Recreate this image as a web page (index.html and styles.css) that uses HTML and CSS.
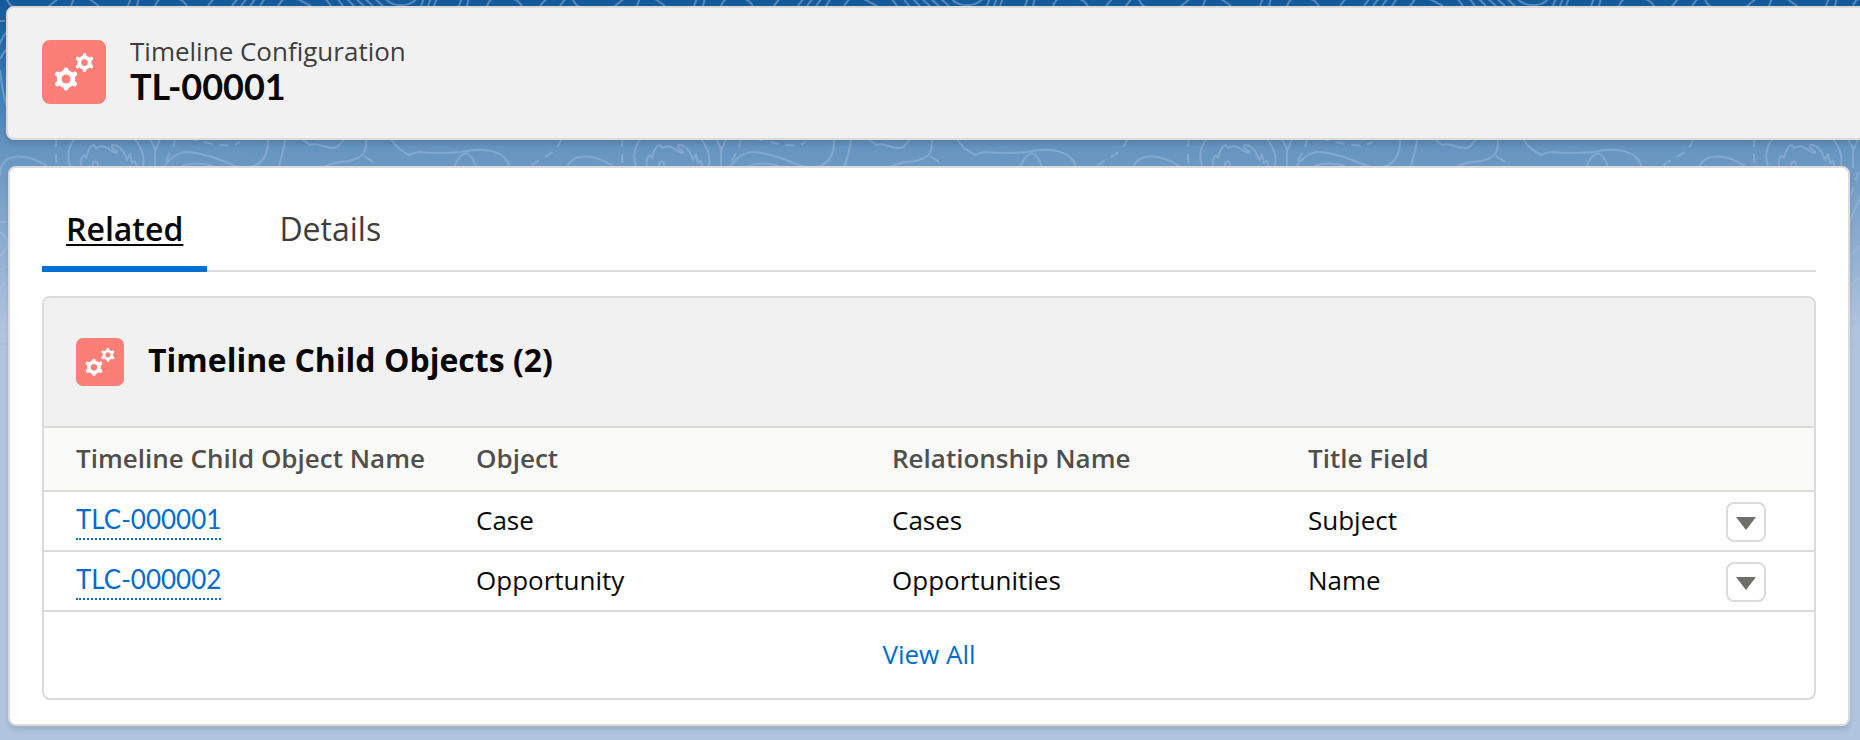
FILE: index.html
```
<!DOCTYPE html>
<html lang="en">
<head>
<meta charset="utf-8">
<meta name="viewport" content="width=device-width, initial-scale=1">
<title>TL-00001 | Timeline Configuration</title>
<link rel="stylesheet" href="styles.css">
</head>
<body>
<svg class="backdrop" aria-hidden="true">
  <defs>
    <pattern id="contours" width="566" height="380" patternUnits="userSpaceOnUse">
      <g class="contour">
        <path d="M6 -4C9 12 25 12 48 7L60 -3M71 6L74 -2M88 -2L99 6M128 6L131 -2M137 6L139 -2M155 6C157 1 159 -1 162 -3M174 -3C183 0 185 3 187 6M208 6L214 -2M232 6L238 -2M241 6L247 -2M250 6L256 -2M260 6L265 -2M278 6L284 -2M294 -3L311 6M325 -2L331 6M337 -2L343 6M346 -2L354 6M355 -2L364 6M364 -2L373 6M374 -2L383 6M384 -3C392 8 410 8 418 -3M421 6L424 -2M428 6L431 -2M434 6L437 -2M459 6L462 -2M467 6L469 -2M487 6C489 1 491 -1 494 -3M510 -2C518 0 520 3 522 6M540 6L547 -2M560 6L566 -2"/>
        <path d="M0 21H5M8 30C-2 42 -2 50 -3 58M0 59C4 52 6 49 12 46M0 70C2 90 4 100 9 112M0 175C1 150 28 154 47 166M0 222H7M0 232C10 238 9 248 0 256M0 271L9 265M0 290L9 274M0 303L12 282M0 318L12 300M3 330L9 326M0 344H10"/>
        <path d="M70 166C66 154 69 142 80 134M130 134C141 144 145 154 143 166M81 166C80 160 81 157 84 155L86 158C88 150 90 145 94 145L96 148C106 142 110 153 117 153C119 150 110 150 112 145C120 144 124 151 127 160L130 154L132 163L135 161L137 168M93 166C92 160 99 160 98 166"/>
        <path d="M150 139C154 146 155 148 155 151L160 139M155 151L155 168M163 168C178 146 190 151 212 157C228 162 235 168 246 168C265 166 269 151 268 136M182 166Q197 161 213 166M285 138C285 150 280 158 279 168M302 139L310 145C318 142 324 148 333 148C340 148 338 144 344 140M366 138C367 151 364 158 349 161C337 162 331 163 324 167M364 156L373 162M391 139C396 147 403 152 409 155C413 154 414 152 420 152C435 154 449 153 461 152C484 147 506 150 510 168M454 167C462 149 470 149 476 167"/>
        <path d="M152 222C158 205 160 200 168 188M152 256L168 240M152 286L168 270M152 325L170 317M153 347L159 341"/>
        <path class="contour-dashed" d="M57 138C55 145 56 158 57 168M175 138C173 153 169 150 164 167M188 138C203 142 212 144 222 145S234 145 240 142M561 139C557 155 545 154 531 166M160 172L153 195"/>
      </g>
    </pattern>
    <symbol id="gears" viewBox="0 0 64 64">
      <path fill="none" stroke="currentColor" stroke-width="4.6" d="M24 32.200a6.800 6.800 0 1 0 .01 0z"/>
      <path fill="none" stroke="currentColor" stroke-width="5" stroke-linecap="round" d="M24 31V30M24 47v1M31 35l1.500-.9M17 43l-1.500.9M31 43l1.500.9M17 35l-1.500-.9"/>
      <path fill="none" stroke="currentColor" stroke-width="3.600" d="M42.500 17.300a5.200 5.200 0 1 0 .01 0z"/>
      <path fill="none" stroke="currentColor" stroke-width="3.800" stroke-linecap="round" d="M42.500 16v-1M42.500 29v1M48 19.300l1.300-.7M37 25.700l-1.300.7M48 25.700l1.300.7M37 19.300l-1.300-.7"/>
    </symbol>
  </defs>
  <rect width="100%" height="380" fill="url(#contours)"/>
</svg>

<header class="page-header">
  <svg class="entity-icon entity-icon-large" aria-hidden="true"><use href="#gears"/></svg>
  <div class="page-heading">
    <p class="entity-label">Timeline Configuration</p>
    <h1 class="record-name">TL-00001</h1>
  </div>
</header>

<main class="record">
  <nav class="tabs">
    <a class="tab tab-active" href="#related" aria-current="page">Related</a>
    <a class="tab" href="#details">Details</a>
  </nav>

  <section class="related-list" id="related">
    <header class="related-header">
      <svg class="entity-icon" aria-hidden="true"><use href="#gears"/></svg>
      <h2 class="related-title">Timeline Child Objects (2)</h2>
    </header>
    <table class="records">
      <colgroup><col class="col-name"><col class="col-field"><col class="col-field"><col class="col-field"><col class="col-action"></colgroup>
      <thead>
        <tr><th scope="col">Timeline Child Object Name</th><th scope="col">Object</th><th scope="col">Relationship Name</th><th scope="col">Title Field</th><td></td></tr>
      </thead>
      <tbody>
        <tr>
          <td><a class="record-link" href="#tlc-000001">TLC-000001</a></td><td>Case</td><td>Cases</td><td>Subject</td>
          <td><button class="row-menu" type="button" aria-label="Show actions for TLC-000001"><svg class="caret" viewBox="0 0 20 13" aria-hidden="true"><path d="M0 0H20L10 13Z"/></svg></button></td>
        </tr>
        <tr>
          <td><a class="record-link" href="#tlc-000002">TLC-000002</a></td><td>Opportunity</td><td>Opportunities</td><td>Name</td>
          <td><button class="row-menu" type="button" aria-label="Show actions for TLC-000002"><svg class="caret" viewBox="0 0 20 13" aria-hidden="true"><path d="M0 0H20L10 13Z"/></svg></button></td>
        </tr>
      </tbody>
    </table>
    <footer class="related-footer"><a class="view-all" href="#all">View All</a></footer>
  </section>
</main>
</body>
</html>
```
FILE: styles.css
```
* { box-sizing: border-box; }

html {
  overflow-x: hidden;
  background: #b0c4df linear-gradient(#145a9a 0, #1b609f 20px, #6896c1 155px, #b0c4df 330px) no-repeat;
}

body {
  margin: 0;
  padding: 6px 0 14px 6px;
  overflow-x: hidden;
  color: #080707;
  font-family: "Open Sans", "Noto Sans", sans-serif;
  font-size: 26px;
  line-height: 32px;
}

.backdrop {
  position: absolute;
  inset: 0 0 auto 0;
  z-index: -1;
  width: 100%;
  height: 380px;
}

.contour {
  fill: none;
  stroke: #a3bee2;
  stroke-opacity: 0.45;
  stroke-width: 2;
  stroke-linejoin: round;
}

.contour-dashed { stroke-dasharray: 9 7; }

.page-header {
  display: flex;
  align-items: center;
  gap: 24px;
  height: 134px;
  margin-right: -8px;
  padding: 0 34px 2px;
  border: 2px solid #dddbda;
  border-radius: 8px;
  background: #f1f1f1;
  box-shadow: 0 4px 4px rgba(0, 0, 0, 0.1);
}

.page-heading { padding-bottom: 4px; }

.entity-icon {
  flex: none;
  width: 48px;
  height: 48px;
  border-radius: 7px;
  background: #fb7f77;
  color: #fff;
}

.entity-icon-large { width: 64px; height: 64px; border-radius: 8px; }

.entity-label {
  margin: 0;
  color: #3e3e3c;
}

.record-name {
  margin: 0;
  font-family: Lato, sans-serif;
  font-size: 36px;
  line-height: 38px;
}

.record {
  margin: 26px 10px 0 2px;
  padding: 32px 32px 24px;
  border: 2px solid #dddbda;
  border-radius: 8px;
  background: #fff;
  box-shadow: 0 4px 4px rgba(0, 0, 0, 0.1);
}

.tabs {
  display: flex;
  gap: 48px;
  margin-bottom: 24px;
  border-bottom: 2px solid #dddbda;
  font-size: 32px;
}

.tab {
  margin-bottom: -2px;
  padding: 0 24px 8px;
  border-bottom: 6px solid transparent;
  color: #3e3e3c;
  line-height: 58px;
  text-decoration: none;
}

.tab-active {
  border-bottom-color: #0070d2;
  color: #080707;
  font-weight: 600;
  text-decoration: underline;
  text-decoration-thickness: 2px;
  text-underline-offset: 3px;
}

.related-list {
  overflow: hidden;
  border: 2px solid #dddbda;
  border-radius: 8px;
}

.related-header {
  display: flex;
  align-items: center;
  gap: 24px;
  height: 130px;
  padding: 0 32px;
  border-bottom: 2px solid #dddbda;
  background: #f1f1f1;
}

.related-title {
  margin: 0;
  padding-bottom: 4px;
  font-size: 32px;
  line-height: 40px;
}

.records {
  width: 100%;
  border-collapse: separate;
  border-spacing: 0;
  table-layout: fixed;
}

.col-name { width: 416px; }
.col-action { width: 106px; }

.records th,
.records td {
  padding: 0 16px 2px;
  border-bottom: 2px solid #dddbda;
  text-align: left;
  white-space: nowrap;
}

.records tr > :first-child { padding-left: 32px; }
.records td { height: 60px; }

.records thead th,
.records thead td {
  height: 64px;
  background: #fafaf9;
  color: #514f4d;
  font-weight: 600;
}

.records td:first-child { padding-bottom: 0; }
.records td:last-child { padding: 2px 0 0; }

.record-link {
  display: inline-block;
  height: 38px;
  border-bottom: 2px dotted #0070d2;
  color: #006dcc;
  font-family: Lato, sans-serif;
  line-height: 34px;
  text-decoration: none;
  vertical-align: middle;
}

.row-menu {
  display: flex;
  align-items: center;
  justify-content: center;
  width: 40px;
  height: 40px;
  margin-left: 18px;
  padding: 2px 0 0;
  border: 2px solid #dddbda;
  border-radius: 8px;
  background: #fff;
}

.caret { width: 20px; height: 13px; fill: #706e6b; }

.related-footer {
  display: flex;
  align-items: center;
  justify-content: center;
  height: 86px;
  padding-bottom: 2px;
}

.view-all { color: #006dcc; text-decoration: none; }
```
